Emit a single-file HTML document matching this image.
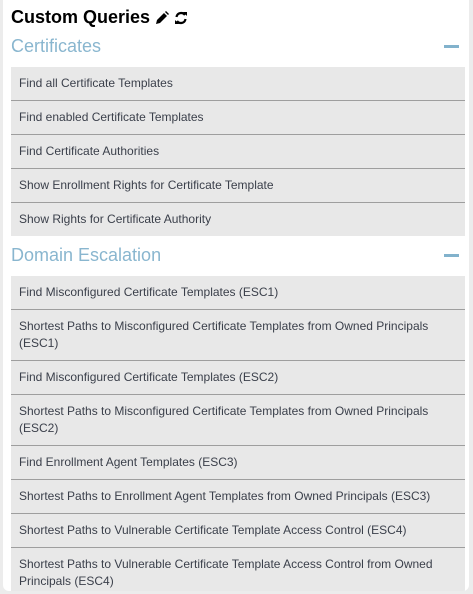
<!DOCTYPE html>
<html><head><meta charset="utf-8"><style>
html,body{margin:0;padding:0;width:473px;height:594px;overflow:hidden;background:#ececec;font-family:"Liberation Sans",sans-serif;}
.panel{position:absolute;left:3px;top:0;width:466px;height:591px;background:#fff;border-radius:0 0 6px 6px;overflow:hidden;}
h1{position:absolute;left:8px;top:6px;margin:0;font-size:18px;font-weight:bold;color:#000;line-height:22px;}
h1 svg{vertical-align:-2px}
.sec{position:absolute;left:8px;width:454px;font-size:18px;color:#89b6cf;line-height:22px;}
.sec .bar{position:absolute;right:6px;top:10px;width:15px;height:3px;background:#82b2cc;}
.list{position:absolute;left:8px;width:454px;}
.it{background:#e8e8e8;border-bottom:1px solid #9e9e9e;padding:8px 8px;font-size:12px;line-height:17px;color:#3a3f4a;}
.it:last-child{border-bottom:none}
</style></head><body>
<div class="panel">
<h1>Custom Queries <svg width="14" height="14" viewBox="0 0 14 14"><path d="M1 13l1-4 7-7 3 3-7 7z" fill="#000"/><path d="M10 1l3 3 1-1-3-3z" fill="#000"/></svg> <svg width="14" height="14" viewBox="0 0 14 14"><path d="M2.5 6A4.7 4.7 0 0 1 11 4" stroke="#000" stroke-width="2.2" fill="none"/><path d="M9 1h4v4z" fill="#000"/><path d="M11.5 8A4.7 4.7 0 0 1 3 10" stroke="#000" stroke-width="2.2" fill="none"/><path d="M5 13H1V9z" fill="#000"/></svg></h1>
<div class="sec" style="top:35px">Certificates<div class="bar"></div></div>
<div class="list" style="top:67px">
<div class="it">Find all Certificate Templates</div>
<div class="it">Find enabled Certificate Templates</div>
<div class="it">Find Certificate Authorities</div>
<div class="it">Show Enrollment Rights for Certificate Template</div>
<div class="it">Show Rights for Certificate Authority</div>
</div>
<div class="sec" style="top:244px">Domain Escalation<div class="bar"></div></div>
<div class="list" style="top:276px">
<div class="it">Find Misconfigured Certificate Templates (ESC1)</div>
<div class="it">Shortest Paths to Misconfigured Certificate Templates from Owned Principals (ESC1)</div>
<div class="it">Find Misconfigured Certificate Templates (ESC2)</div>
<div class="it">Shortest Paths to Misconfigured Certificate Templates from Owned Principals (ESC2)</div>
<div class="it">Find Enrollment Agent Templates (ESC3)</div>
<div class="it">Shortest Paths to Enrollment Agent Templates from Owned Principals (ESC3)</div>
<div class="it">Shortest Paths to Vulnerable Certificate Template Access Control (ESC4)</div>
<div class="it">Shortest Paths to Vulnerable Certificate Template Access Control from Owned Principals (ESC4)</div>
</div>
</div>
</body></html>
